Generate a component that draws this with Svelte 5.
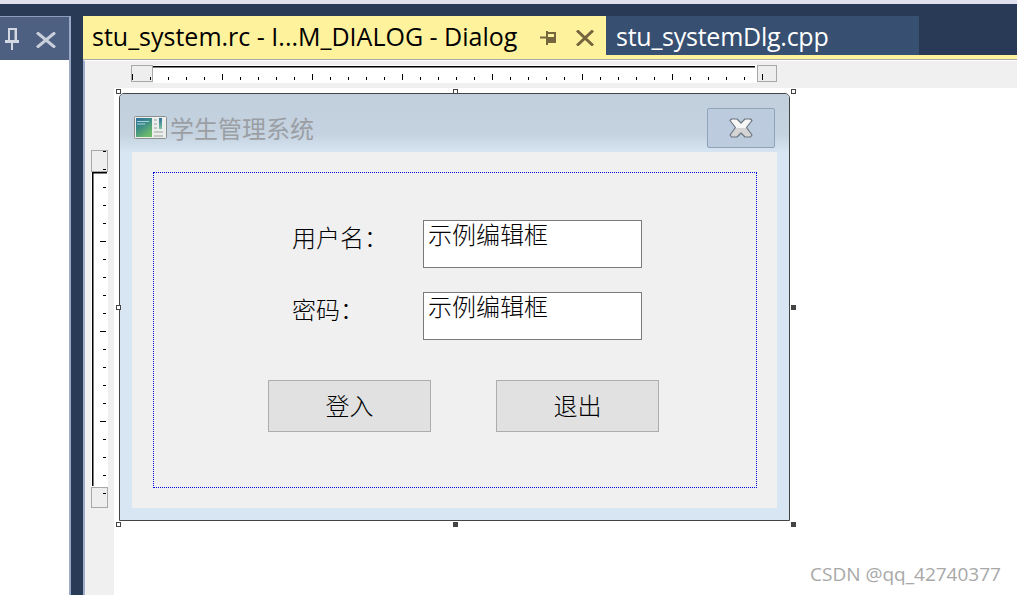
<script>
  const hTicks = [];
  for (let x = 132; x <= 762; x += 18) hTicks.push({ x: x - 131, major: (x - 222) % 90 === 0 });
  const vTicks = [];
  for (let y = 151; y <= 493; y += 18) vTicks.push({ y: y - 150, major: (y - 241) % 90 === 0 && y > 172 && y < 487 });
  const handles = [
    ['h-tl', false], ['h-tm', false], ['h-tr', false],
    ['h-ml', false], ['h-mr', true],
    ['h-bl', false], ['h-bm', true], ['h-br', true]
  ];
  const fields = [
    { label: '用户名：', cls: 'row-first' },
    { label: '密码：', cls: 'row-next' }
  ];
</script>

<div class="app">
  <div class="topline"></div>
  <div class="navy"></div>
  <div class="main">
    <aside class="panel">
      <div class="panel-head">
        <svg class="pin" width="14" height="22" viewBox="0 0 14 22">
          <path fill-rule="evenodd" d="M3 0h9v12h2v3H8v7H6v-7H0v-3h3zM5 2v10h4.5V2z" fill="#d3d8e2"/>
        </svg>
        <svg class="close" width="20" height="16" viewBox="0 0 20 16">
          <path d="M1 0.5l18 15M19 0.5l-18 15" fill="none" stroke="#c9cfdb" stroke-width="3"/>
        </svg>
      </div>
    </aside>
    <div class="divider"></div>
    <section class="doc">
      <div class="tabs">
        <div class="tab active">
          <span class="tab-title">stu_system.rc - I...M_DIALOG - Dialog</span>
          <svg class="tab-pin" width="16" height="14" viewBox="0 0 16 14">
            <path fill-rule="evenodd" d="M6 0h2v1h8v11H8v2H6V7.5H0v-2h6zM8 3v3h6V3z" fill="#75663e"/>
          </svg>
          <svg class="tab-close" width="18" height="16" viewBox="0 0 18 16">
            <path d="M1 0.5l16 15M17 0.5l-16 15" fill="none" stroke="#75663e" stroke-width="3"/>
          </svg>
        </div>
        <div class="tab other">stu_systemDlg.cpp</div>
      </div>
      <div class="tab-rail"></div>
      <div class="tab-rule"></div>

      <div class="surface">
        <div class="rule-band">
          <svg class="hruler" width="646" height="18" viewBox="0 0 646 18">
            <rect x="22" y="0" width="604" height="18" fill="#fff"/>
            <rect x="22" y="1" width="602" height="1.5" fill="#000"/>
            <rect x="0.5" y="0.5" width="21" height="16" fill="#eee" stroke="#a8a8a8"/>
            <rect x="626.5" y="0.5" width="19" height="16" fill="#eee" stroke="#a8a8a8"/>
            {#each hTicks as t}
              <rect x={t.x} y={t.major ? 9 : 12} width="1" height={t.major ? 6 : 3} fill="#000"/>
            {/each}
          </svg>
        </div>
        <div class="stage">
          <div class="gutter">
            <svg class="vruler" width="18" height="359" viewBox="0 0 18 359">
              <rect x="0" y="22" width="17" height="315" fill="#fff"/>
              <rect x="1" y="22" width="1.5" height="314" fill="#000"/>
              <rect x="1" y="22" width="15" height="1.5" fill="#000"/>
              <rect x="0.5" y="0.5" width="16" height="21" fill="#eee" stroke="#a8a8a8"/>
              <rect x="0.5" y="337.5" width="16" height="20" fill="#eee" stroke="#a8a8a8"/>
              {#each vTicks as t}
                <rect x={t.major ? 9 : 12} y={t.y} width={t.major ? 6 : 3} height="1" fill="#000"/>
              {/each}
            </svg>
          </div>
          <div class="canvas">
            <div class="dialog">
              {#each handles as [name, solid]}
                <span class="handle {name}" class:solid></span>
              {/each}
              <div class="titlebar">
                <svg class="app-icon" width="33" height="25" viewBox="0 0 33 25">
                  <defs>
                    <linearGradient id="pic" x1="0" y1="0" x2="0.6" y2="1">
                      <stop offset="0" stop-color="#2f6f9c"/>
                      <stop offset="0.5" stop-color="#3f8f86"/>
                      <stop offset="1" stop-color="#6dbb6a"/>
                    </linearGradient>
                    <linearGradient id="sliver" x1="0" y1="0" x2="0" y2="1">
                      <stop offset="0" stop-color="#2f6f9c"/>
                      <stop offset="1" stop-color="#7cc29a"/>
                    </linearGradient>
                  </defs>
                  <rect x="0.5" y="1.5" width="32" height="22" rx="1" fill="#eceeec" stroke="#8b9190"/>
                  <rect x="2" y="3" width="16" height="19" fill="url(#pic)"/>
                  <path d="M3 6.5h12M3 9h8" stroke="#a9d3dc" stroke-width="1"/>
                  <rect x="25" y="3" width="3" height="11" fill="url(#sliver)"/>
                  <path d="M20 5h3M20 9h3M20 13h3M20 17h9M20 21h9" stroke="#9aa0a0" stroke-width="1"/>
                </svg>
                <span class="dlg-title">学生管理系统</span>
                <div class="dlg-close">
                  <svg width="24" height="20" viewBox="0 0 24 20">
                    <defs>
                      <linearGradient id="xfill" x1="0" y1="0" x2="0" y2="1">
                        <stop offset="0.5" stop-color="#f6f6f6"/>
                        <stop offset="0.5" stop-color="#d4d4d4"/>
                      </linearGradient>
                    </defs>
                    <path d="M1 2.5 2.5 1h5.5l4 4 4-4h5.5L23 2.500 17.500 9.500 23 17l-1.500 2H16l-4-4-4 4H2.500L1 17l5.500-7.500z" fill="url(#xfill)" stroke="#6d7480" stroke-width="1.200" stroke-linejoin="round"/>
                  </svg>
                </div>
              </div>
              <div class="client">
                <div class="dotted">
                  {#each fields as f}
                    <div class="row {f.cls}">
                      <span class="label">{f.label}</span>
                      <div class="edit">示例编辑框</div>
                    </div>
                  {/each}
                  <div class="buttons">
                    <button class="btn">登入</button>
                    <button class="btn">退出</button>
                  </div>
                </div>
              </div>
            </div>
          </div>
        </div>
      </div>
    </section>
  </div>
  <div class="watermark">CSDN @qq_42740377</div>
</div>

<style>
  :global(body) { margin: 0; background: #fff; overflow: hidden; }
  .app {
    position: relative;
    width: 1017px;
    height: 595px;
    overflow: hidden;
    display: flex;
    flex-direction: column;
    background: #293a56;
    font-family: "Noto Sans CJK SC", "Noto Sans", sans-serif;
  }
  .topline { height: 4px; background: #dfe2ee; flex: none; }
  .navy { height: 12px; background: #293a56; flex: none; }
  .main { flex: 1; display: flex; min-height: 0; }

  .panel {
    width: 71px;
    flex: none;
    box-sizing: border-box;
    background: #fff;
    border-top: 1px solid #8d9cbc;
    border-right: 2px solid #9aa8c6;
    display: flex;
    flex-direction: column;
  }
  .panel-head {
    height: 43px;
    background: #4d6082;
    position: relative;
  }
  .pin { position: absolute; left: 5px; top: 11px; }
  .close { position: absolute; left: 36px; top: 15px; }
  .divider { width: 12px; flex: none; background: #293a56; }

  .doc { flex: 1; display: flex; flex-direction: column; min-width: 0; }
  .tabs { display: flex; height: 39px; flex: none; font-family: "Open Sans", "Noto Sans", sans-serif; font-size: 25px; }
  .tab { display: flex; align-items: center; line-height: 39px; }
  .active {
    width: 523px;
    background: #fff29d;
    color: #000;
    padding-left: 9px;
    box-sizing: border-box;
  }
  .tab-title { width: 448px; white-space: nowrap; flex: none; padding-top: 2px; }
  .tab-pin { flex: none; margin-top: 5px; }
  .tab-close { flex: none; margin-left: 20px; margin-top: 5px; }
  .other {
    width: 313px;
    background: #374f70;
    color: #fff;
    padding: 2px 0 0 10px;
    box-sizing: border-box;
    letter-spacing: -0.25px;
  }
  .tab-rail { height: 4px; background: #fff29d; flex: none; }
  .tab-rule { height: 1px; background: #a9a9a9; flex: none; }

  .surface {
    flex: 1;
    min-height: 0;
    display: flex;
    flex-direction: column;
    background: #f0f0f0;
    border-left: 2px solid #a0aecb;
    border-top: 1px solid #fff;
  }
  .rule-band { height: 27px; flex: none; box-sizing: border-box; padding: 4px 0 0 46px; }
  .hruler { display: block; }
  .stage { flex: 1; display: flex; min-height: 0; }
  .gutter { width: 29px; flex: none; box-sizing: border-box; padding: 62px 0 0 6px; }
  .vruler { display: block; }
  .canvas { flex: 1; background: #fff; padding: 5px 0 0 5px; }

  .dialog {
    position: relative;
    width: 671px;
    height: 428px;
    box-sizing: border-box;
    border: 1px solid #444;
    border-radius: 5px 5px 0 0;
    background: #d8e5f2;
    display: flex;
    flex-direction: column;
  }
  .handle {
    position: absolute;
    width: 5px;
    height: 5px;
    box-sizing: border-box;
    background: #fff;
    border: 1px solid #444;
  }
  .handle.solid { background: #444; }
  .h-tl { left: -4px; top: -5px; }
  .h-tm { left: 333px; top: -5px; }
  .h-tr { left: 671px; top: -5px; }
  .h-ml { left: -4px; top: 211px; }
  .h-mr { left: 671px; top: 211px; }
  .h-bl { left: -4px; top: 428px; }
  .h-bm { left: 333px; top: 428px; }
  .h-br { left: 671px; top: 428px; }

  .titlebar {
    height: 58px;
    flex: none;
    box-sizing: border-box;
    display: flex;
    align-items: flex-start;
    padding: 21px 14px 0 14px;
    border-radius: 4px 4px 0 0;
    background: linear-gradient(#c1cfdd 0, #c5d2e0 70%, #d7e4f1 100%);
  }
  .app-icon { flex: none; }
  .dlg-title { font-size: 24px; line-height: 26px; font-weight: 400; color: #9b9fa4; margin-left: 3px; }
  .dlg-close {
    margin-left: auto;
    margin-top: -7px;
    width: 68px;
    height: 40px;
    box-sizing: border-box;
    border: 1px solid #8fa3bb;
    border-radius: 2px;
    background: #bccbdd;
    display: flex;
    align-items: center;
    justify-content: center;
  }

  .client {
    flex: 1;
    margin: 0 12px 12px;
    background: #f0f0f0;
    padding: 20px 20px 20px 21px;
    display: flex;
  }
  .dotted {
    flex: 1;
    border: 1px dotted #0000d8;
    display: flex;
    flex-direction: column;
    color: #000;
    font-size: 24px;
    font-weight: 300;
  }
  .row { display: flex; margin-left: 138px; }
  .row-first { margin-top: 47px; }
  .row-next { margin-top: 24px; }
  .label { width: 131px; line-height: 34px; height: 34px; flex: none; }
  .edit {
    width: 219px;
    height: 48px;
    box-sizing: border-box;
    border: 1px solid #7a7a7a;
    background: #fff;
    padding-left: 4px;
    line-height: 26px;
  }
  .buttons { display: flex; gap: 65px; margin: 40px 0 0 114px; }
  .btn {
    width: 163px;
    height: 52px;
    box-sizing: border-box;
    border: 1px solid #adadad;
    background: #e1e1e1;
    font: inherit;
    line-height: 48px;
    color: #000;
    padding: 0 0 2px;
  }
  .watermark {
    position: absolute;
    left: 810px;
    top: 561px;
    font-family: "Open Sans", sans-serif;
    font-size: 19px;
    line-height: 26px;
    color: #a8a8a8;
    white-space: nowrap;
  }
</style>
